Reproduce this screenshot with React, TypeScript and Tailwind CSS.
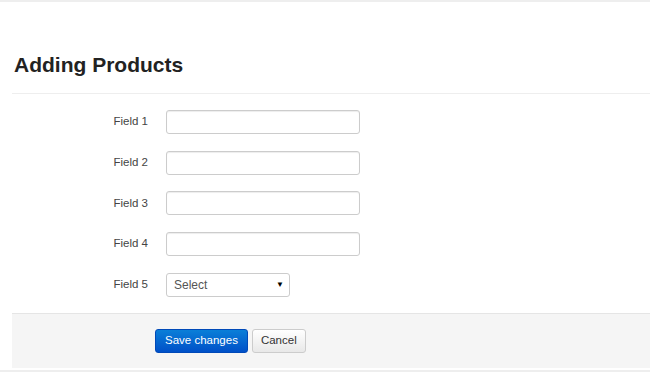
import React from "react";

const fields = ["Field 1", "Field 2", "Field 3", "Field 4"];

export default function App() {
  return (
    <div className="w-[650px] h-[374px] bg-white overflow-hidden text-[#333]" style={{ fontFamily: '"Liberation Sans", Arial, sans-serif' }}>
      <div className="h-[2px] bg-[#eeeeee]" />
      <div className="pl-[12px]">
        <h1 className="pl-[2px] pt-[47px] pb-[13px] text-[21px] leading-[31px] font-bold text-[#222]">Adding Products</h1>
        <div className="border-t border-[#eeeeee] pt-[16px]">
          <div className="flex flex-col gap-[16.7px]">
            {fields.map((f) => (
              <div key={f} className="flex items-center">
                <label className="w-[136px] text-right text-[11.5px] text-[#444]">{f}</label>
                <input
                  className="ml-[18px] w-[194px] h-[24px] border border-[#cccccc] rounded-[3px] bg-white shadow-[inset_0_1px_1px_rgba(0,0,0,0.075)] outline-none"
                  type="text"
                />
              </div>
            ))}
            <div className="flex items-center">
              <label className="w-[136px] text-right text-[11.5px] text-[#444]">Field 5</label>
              <div className="ml-[18px] w-[124px] h-[24px] border border-[#cccccc] rounded-[3px] bg-white flex items-center justify-between pl-[7px] pr-[5px] text-[12px] text-[#555]">
                <span>Select</span>
                <span className="text-[8px] text-black">▼</span>
              </div>
            </div>
          </div>
          <div className="mt-[16px] border-t border-[#e5e5e5] bg-[#f5f5f5] h-[55px] flex items-center pl-[143px] gap-[4px]">
            <button className="h-[24px] px-[9px] rounded-[3px] border border-[#0049b8] text-white text-[11.5px] bg-[linear-gradient(#0a7fd8,#0050c8)]">
              Save changes
            </button>
            <button className="h-[24px] px-[8px] rounded-[3px] border border-[#cccccc] text-[#333] text-[11.5px] bg-[linear-gradient(#ffffff,#e8e8e8)]">
              Cancel
            </button>
          </div>
          <div className="h-[2px]" />
          <div className="h-[2px] bg-[#eeeeee] -ml-[12px]" />
        </div>
      </div>
    </div>
  );
}
